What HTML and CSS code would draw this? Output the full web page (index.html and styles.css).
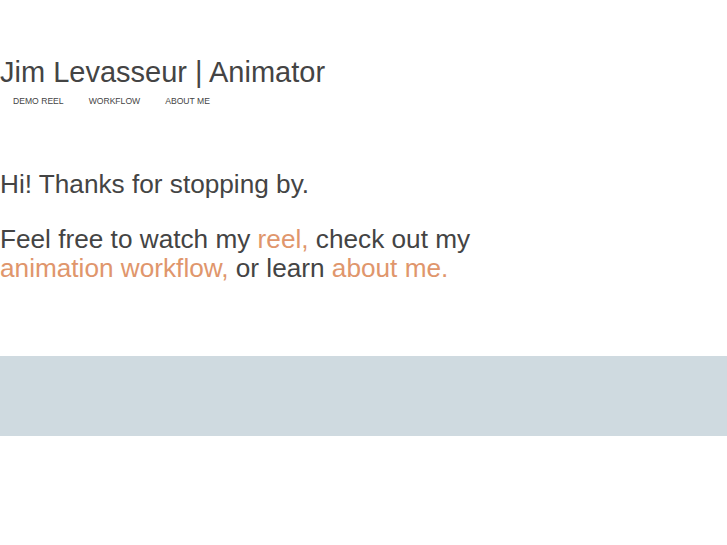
FILE: index.html
```html
<!DOCTYPE html>
<html lang="en">
<head>
    <meta charset="UTF-8">
    <meta name="viewport" content="width=device-width, initial-scale=1.0">
    <title>Jim Levasseur | Animator</title>
    <link rel="stylesheet" href="styles.css">
</head>
<body>

    <div class="header">
        <h1>Jim Levasseur | Animator</h1>
        <ul class="nav">
            <li><a href="#">Demo Reel</a></li>
            <li><a href="#">Workflow</a></li>
            <li><a href="#">About Me</a></li>
        </ul>
    </div>

    <div class="intro">
        <p>Hi! Thanks for stopping by.</p>
        <p>Feel free to watch my <a href="#">reel,</a> check out my<br>
        <a href="#">animation workflow,</a> or learn <a href="#">about me.</a></p>
    </div>

    <div class="band"></div>

</body>
</html>
```

FILE: styles.css
```css
body {
    font-family: "Liberation Sans", Arial, sans-serif;
    color: #444;
    background-color: #fff;
    margin: 0;
    padding: 0;
}
.header {
    padding-top: 54px;
}
h1 {
    font-size: 29px;
    font-weight: normal;
    line-height: 36px;
    margin: 0;
}
.nav {
    list-style: none;
    margin: 6px 0 0 0;
    padding: 0 0 0 13px;
    display: flex;
    gap: 25px;
    font-size: 8.6px;
    text-transform: uppercase;
}
.nav a {
    color: #444;
    text-decoration: none;
}
.intro {
    margin-top: 64px;
    font-size: 26.2px;
    line-height: 29px;
}
.intro p {
    margin: 0 0 26px 0;
}
.intro a {
    color: #e0966c;
    text-decoration: none;
}
.band {
    margin-top: 73px;
    height: 80px;
    background-color: #cfdae0;
}
```
